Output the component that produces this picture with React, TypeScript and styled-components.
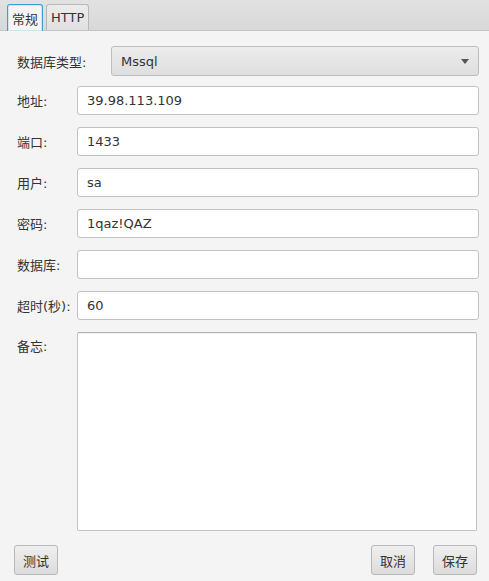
import React from "react";
import styled, { createGlobalStyle } from "styled-components";

const Global = createGlobalStyle`
  html, body { margin: 0; padding: 0; background: #f4f4f4; }
  body { font-family: "DejaVu Sans", "Noto Sans CJK SC", sans-serif; font-size: 13px; color: #333; }
  #root { width: 489px; height: 581px; }
`;

const Page = styled.div`
  width: 489px;
  height: 581px;
  display: flex;
  flex-direction: column;
  background: #f4f4f4;
  overflow: hidden;
`;

const TabHeader = styled.div`
  height: 31px;
  box-sizing: border-box;
  display: flex;
  align-items: flex-end;
  gap: 3px;
  padding-left: 7px;
  background: linear-gradient(#e2e2e2, #d8d8d8);
  border-bottom: 1px solid #c4c4c4;
`;

const Tab = styled.div<{ $active?: boolean }>`
  box-sizing: border-box;
  padding: 0 4px;
  display: flex;
  align-items: center;
  border: 1px solid ${(p) => (p.$active ? "#3a9fd5" : "#b8b8b8")};
  border-bottom: none;
  border-radius: 3px 3px 0 0;
  background: ${(p) => (p.$active ? "#f4f4f4" : "linear-gradient(#ececec, #e0e0e0)")};
  box-shadow: ${(p) => (p.$active ? "inset 0 0 0 1px #cbe6f3" : "none")};
  color: #333;
  font-size: 13px;
  margin-bottom: ${(p) => (p.$active ? "-1px" : "0")};
  height: ${(p) => (p.$active ? "27px" : "26px")};
`;

const Body = styled.div`
  flex: 1;
  display: flex;
  flex-direction: column;
  padding: 15px 10px 6px 14px;
`;

const ComboRow = styled.div`
  display: flex;
  align-items: center;
  padding-left: 3px;
  margin-bottom: 10px;
`;

const ComboLabel = styled.div`
  width: 94px;
`;

const Combo = styled.div`
  flex: 1;
  height: 30px;
  box-sizing: border-box;
  border: 1px solid #bdbdbd;
  border-radius: 3px;
  background: linear-gradient(#ececec, #dedede);
  display: flex;
  align-items: center;
  justify-content: space-between;
  padding: 0 9px 0 9px;
`;

const Arrow = styled.div`
  width: 0;
  height: 0;
  border-left: 4px solid transparent;
  border-right: 4px solid transparent;
  border-top: 5px solid #555;
`;

const Form = styled.div`
  display: grid;
  grid-template-columns: 60px 1fr;
  grid-template-rows: repeat(6, 29px) 199px;
  row-gap: 12px;
  padding-left: 3px;
`;

const Label = styled.div<{ $top?: boolean }>`
  display: flex;
  align-items: ${(p) => (p.$top ? "flex-start" : "center")};
  padding-top: ${(p) => (p.$top ? "4px" : "0")};
  white-space: nowrap;
`;

const Field = styled.div`
  box-sizing: border-box;
  height: 29px;
  border: 1px solid #c2c2c2;
  border-radius: 3px;
  background: #fff;
  display: flex;
  align-items: center;
  padding: 0 9px;
  color: #333;
`;

const Area = styled.div`
  box-sizing: border-box;
  border: 1px solid #c2c2c2;
  border-top-color: #b0b0b0;
  border-radius: 2px;
  background: #fff;
  margin-right: 2px;
  box-shadow: inset 0 1px 1px rgba(0, 0, 0, 0.06);
`;

const Footer = styled.div`
  margin-top: auto;
  display: flex;
  align-items: center;
  padding-right: 2px;
`;

const Spacer = styled.div`
  flex: 1;
`;

const Button = styled.div<{ $gap?: number }>`
  height: 30px;
  box-sizing: border-box;
  padding: 0 8px;
  display: flex;
  align-items: center;
  border: 1px solid #b8b8b8;
  border-radius: 3px;
  background: linear-gradient(#efefef, #dcdcdc);
  margin-left: ${(p) => p.$gap ?? 0}px;
  color: #333;
`;

const rows: [string, string][] = [
  ["地址:", "39.98.113.109"],
  ["端口:", "1433"],
  ["用户:", "sa"],
  ["密码:", "1qaz!QAZ"],
  ["数据库:", ""],
  ["超时(秒):", "60"],
];

export default function App() {
  return (
    <Page>
      <Global />
      <TabHeader>
        <Tab $active>常规</Tab>
        <Tab>HTTP</Tab>
      </TabHeader>
      <Body>
        <ComboRow>
          <ComboLabel>数据库类型:</ComboLabel>
          <Combo>
            <span>Mssql</span>
            <Arrow />
          </Combo>
        </ComboRow>
        <Form>
          {rows.map(([l, v]) => (
            <React.Fragment key={l}>
              <Label>{l}</Label>
              <Field>{v}</Field>
            </React.Fragment>
          ))}
          <Label $top>备忘:</Label>
          <Area />
        </Form>
        <Footer>
          <Button>测试</Button>
          <Spacer />
          <Button>取消</Button>
          <Button $gap={18}>保存</Button>
        </Footer>
      </Body>
    </Page>
  );
}
